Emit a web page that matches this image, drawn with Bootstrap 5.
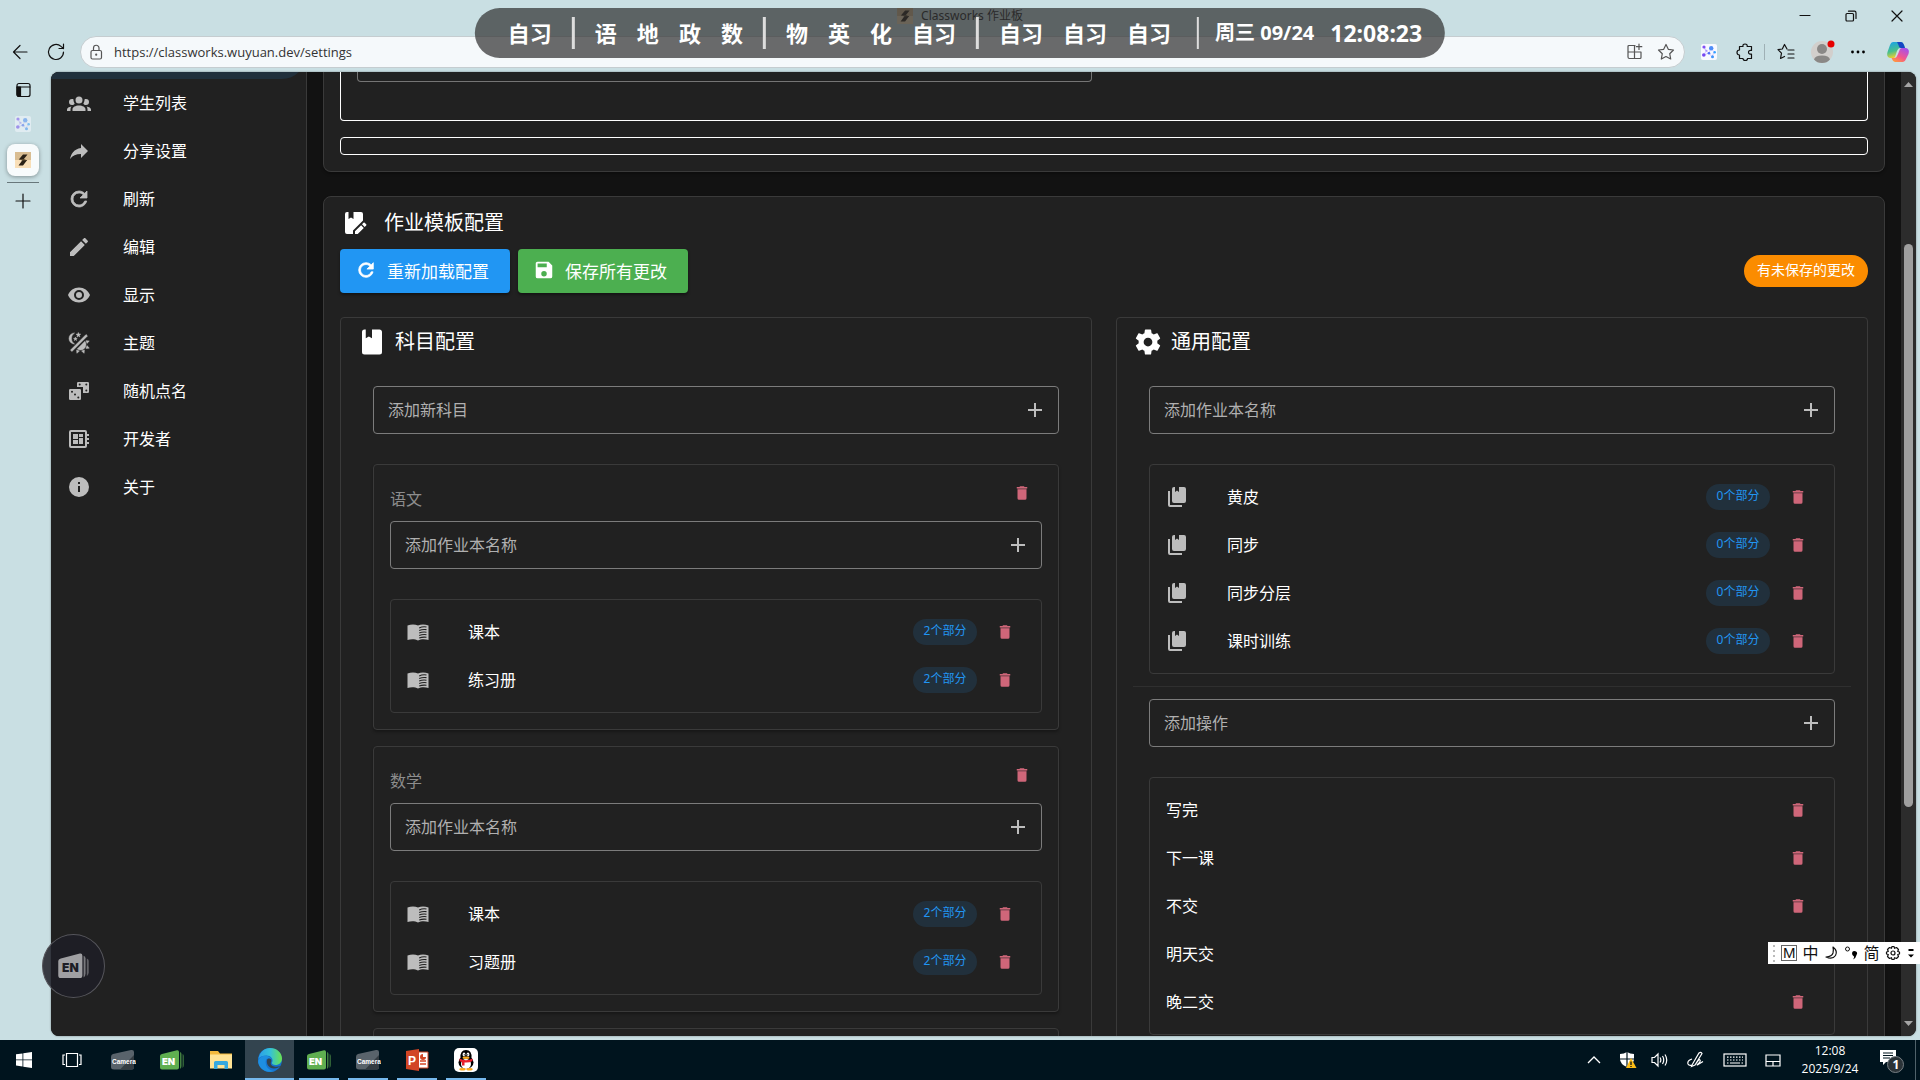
<!DOCTYPE html>
<html lang="zh-CN">
<head>
<meta charset="utf-8">
<meta name="viewport" content="width=device-width, initial-scale=1">
<title>Classworks 作业板</title>
<link href="https://cdn.jsdelivr.net/npm/bootstrap@5.3.0/dist/css/bootstrap.min.css" rel="stylesheet">
<style>
:root{--chrome:#c9dfe3;--surface:#212121;--line:#3a3a3a;--dim:#bdbdbd}
body{font-family:"Noto Sans","Noto Sans CJK SC",sans-serif;font-size:16px;line-height:24px;background:var(--chrome);color:#fff;height:100vh;overflow:hidden}
svg{display:block;flex:none}
.ic{width:24px;height:24px;fill:currentColor}
.ic18{width:18px;height:18px;fill:currentColor}
.ic22{width:22px;height:22px;fill:currentColor}
.ic30{width:30px;height:30px;fill:currentColor}
.ln{fill:none;stroke:currentColor;stroke-width:1.2;stroke-linecap:round;stroke-linejoin:round}
.bare{background:none;border:0;padding:0;color:inherit;display:flex;align-items:center;justify-content:center;flex:none}
/* browser frame */
.titlebar{height:32px;color:#111}
.titlebar .tabname{font-size:12px;color:#222}
.winbtn{width:46px;height:32px}
.toolbar{height:40px;padding:0 10px 0 8px;gap:12px;color:#111}
.address{height:32px;border:1px solid #c5cdd0;border-radius:16px;background:#f5f9fb;padding:0 8px 0 6px;gap:12px;color:#555}
.address input{background:none;border:0;outline:0;font:13px "Open Sans",sans-serif;color:#333;margin-left:-5px}
.vsep{width:1px;height:16px;background:#9fb0b5}
.toolbar .vsep{margin:0 -3px 0 -5px}
.strip{width:51px;padding-top:6px;padding-right:5px;color:#111;gap:6px}
.strip .tab-on{width:32px;height:32px;margin-top:6px;border-radius:8px;background:#f8fbfc;box-shadow:0 1px 4px rgba(0,0,0,.35)}
.strip .rule{width:32px;height:1px;background:#68777b}
.viewport{border-radius:8px;background:#121212;margin:0 4px 4px 0;box-shadow:0 0 2px rgba(0,0,0,.45)}
/* schedule overlay */
.schedule{top:8px;left:50%;transform:translateX(-50%);height:50px;border-radius:25px;background:rgba(45,45,45,.7);padding:0 23px 9px 33px;gap:20px;font-weight:700;font-size:22px;line-height:32px;white-space:nowrap;z-index:5}
.schedule .bar{width:3px;height:32px;background:#ddd}
.schedule .bar.last{width:2px;margin-left:6px}
.schedule .today{font-size:20px;margin-left:-4px}
.schedule .now{font-size:23px;margin-left:-4px}
/* sidebar */
.side{width:256px;background:var(--surface);border-right:1px solid var(--line)}
.side a{height:48px;padding-left:16px;gap:32px;color:#fff;text-decoration:none}
.side a svg{color:var(--dim)}
.side a.current{margin-top:-41px;background:#21303c;border-radius:0 24px 24px 0}
/* content */
.content{padding:0 16px}
.panel{background:var(--surface);border:1px solid var(--line);border-radius:8px;box-shadow:0 2px 3px rgba(0,0,0,.3)}
.panel.tail{border-top:0;border-radius:0 0 8px 8px;padding:0 16px 16px}
.wire{border:1px solid #fff;border-radius:4px}
.wire.open{height:49px;border-top:0;border-radius:0 0 4px 4px;padding-left:16px}
.wire.open div{width:735px;height:10px;border:1px solid #757575;border-top:0;border-radius:0 0 4px 4px}
.wire.thin{height:18px;margin-top:16px}
.panel h2,.box h2{font-size:20px;line-height:28px;font-weight:400;margin:0}
.panel-head{height:52px;gap:17px;padding-left:3px}
.act{height:44px;border:0;border-radius:4px;color:#fff;font-size:17px;line-height:24px;padding:2px 21px 0 15px;gap:10px;box-shadow:0 2px 3px rgba(0,0,0,.4)}
.act svg{margin-bottom:4px}
.act.blue{background:#2196f3}.act.green{background:#4caf50}
.unsaved{height:32px;border-radius:16px;background:#fb8c00;font-size:14px;line-height:20px;padding:5px 13px 7px}
.box{border:1px solid var(--line);border-radius:4px}
.box-head{height:48px;padding-left:16px;gap:8px}
.box-body{padding:20px 32px 0}
.field{height:48px;border:1px solid #7c7c7c;border-radius:4px;padding:0 11px 0 14px;color:var(--dim)}
.field input{background:none;border:0;outline:0;color:#fff;padding:0}
.field input::placeholder{color:#b0b0b0;opacity:1}
.listbox{margin-top:30px;padding:8px 0}
.item{height:48px;padding:0 16px 0 15px}
.item.plain{padding-left:16px}
.item .ic{color:var(--dim);margin-right:38px}
.count{width:64px;height:26px;border-radius:13px;background:#21303c;color:#2196f3;font-size:12px;line-height:24px;text-align:center;margin-right:8px}
.del{width:40px;height:40px;color:#cf6679}
.subject{padding:0 16px 16px}
.subject.first{margin-top:30px}
.subject-head{height:56px}
.subject-head h3{font-size:16px;line-height:24px;font-weight:400;color:#8d8d8d;margin:12px 0 0}
.split{height:1px;background:#2f2f2f;margin:12px -16px}
.scroll{width:15px;background:#2c2c2c;padding:8px 0}
.scroll .thumb{width:9px;background:#9f9f9f;border-radius:5px}
/* taskbar */
.taskbar{height:40px;background:#00141e;flex:none}
.task{width:49px;height:40px;position:relative}
.task.sys{width:48px}
.task.on{background:#33444f}
.task.run::after{content:"";position:absolute;left:5px;right:4px;bottom:0;height:2px;background:#76b9ed}
.task.on.run::after{left:0;right:0}
.clock{font:12px/18px "Open Sans",sans-serif;text-align:center;width:70px}
.tray{gap:14px}
.tray .vsep{height:40px;margin:0 4px 0 -4px}
/* floating tools */
.ime{right:0;top:942px;width:152px;height:22px;background:#fff;color:#111;z-index:6;font-size:16px;line-height:20px;padding:0 4px 0 5px}
.ime .m{border:1px solid #666;width:16px;height:16px;font:15px/14px "Liberation Sans",sans-serif;text-align:center}
.float-en{left:42px;top:934px;width:63px;height:64px;border-radius:50%;background:rgba(29,29,38,.85);border:1px solid #55555b;z-index:6}
</style>
<script src="https://cdn.jsdelivr.net/npm/bootstrap@5.3.0/dist/js/bootstrap.bundle.min.js"></script>
</head>
<body class="d-flex flex-column">
<svg width="0" height="0" class="position-absolute" aria-hidden="true">
<defs>
<symbol id="group" viewBox="0 0 24 24"><path d="M12,5.5A3.5,3.5 0 0,1 15.5,9A3.5,3.5 0 0,1 12,12.5A3.5,3.5 0 0,1 8.5,9A3.5,3.5 0 0,1 12,5.5M5,8C5.56,8 6.08,8.15 6.53,8.42C6.38,9.85 6.8,11.27 7.66,12.38C7.16,13.34 6.16,14 5,14A3,3 0 0,1 2,11A3,3 0 0,1 5,8M19,8A3,3 0 0,1 22,11A3,3 0 0,1 19,14C17.84,14 16.84,13.34 16.34,12.38C17.2,11.27 17.62,9.85 17.47,8.42C17.92,8.15 18.44,8 19,8M5.5,18.25C5.5,16.18 8.41,14.5 12,14.5C15.59,14.5 18.5,16.18 18.5,18.25V20H5.5V18.25M0,20V18.5C0,17.11 1.89,15.94 4.45,15.6C3.86,16.28 3.5,17.22 3.5,18.25V20H0M24,20H20.5V18.25C20.5,17.22 20.14,16.28 19.55,15.6C22.11,15.94 24,17.11 24,18.5V20Z"/></symbol>
<symbol id="share" viewBox="0 0 24 24"><path d="M21,12L14,5V9C7,10 4,15 3,20C5.5,16.5 9,14.9 14,14.9V19L21,12Z"/></symbol>
<symbol id="refresh" viewBox="0 0 24 24"><path d="M17.65,6.35C16.2,4.9 14.21,4 12,4A8,8 0 0,0 4,12A8,8 0 0,0 12,20C15.73,20 18.84,17.45 19.73,14H17.65C16.83,16.33 14.61,18 12,18A6,6 0 0,1 6,12A6,6 0 0,1 12,6C13.66,6 15.14,6.69 16.22,7.78L13,11H20V4L17.65,6.35Z" stroke="currentColor" stroke-width=".8"/></symbol>
<symbol id="pencil" viewBox="0 0 24 24"><path d="M20.71,7.04C21.1,6.65 21.1,6 20.71,5.63L18.37,3.29C18,2.9 17.35,2.9 16.96,3.29L15.12,5.12L18.87,8.87M3,17.25V21H6.75L17.81,9.93L14.06,6.18L3,17.25Z"/></symbol>
<symbol id="eye" viewBox="0 0 24 24"><path d="M12,9A3,3 0 0,0 9,12A3,3 0 0,0 12,15A3,3 0 0,0 15,12A3,3 0 0,0 12,9M12,17A5,5 0 0,1 7,12A5,5 0 0,1 12,7A5,5 0 0,1 17,12A5,5 0 0,1 12,17M12,4.5C7,4.5 2.73,7.61 1,12C2.73,16.39 7,19.5 12,19.5C17,19.5 21.27,16.39 23,12C21.27,7.61 17,4.5 12,4.5Z"/></symbol>
<symbol id="theme" viewBox="0 0 24 24"><path d="M7.5,2C5.71,3.15 4.5,5.18 4.5,7.5C4.5,9.82 5.71,11.85 7.53,13C4.46,13 2,10.54 2,7.5A5.5,5.5 0 0,1 7.5,2M19.07,3.5L20.5,4.93L4.93,20.5L3.5,19.07L19.07,3.5M12.89,5.93L11.41,5L9.97,6L10.39,4.3L9,3.24L10.75,3.12L11.33,1.47L12,3.1L13.73,3.13L12.38,4.26L12.89,5.93M9.59,9.54L8.43,8.81L7.31,9.59L7.65,8.27L6.56,7.44L7.92,7.35L8.37,6.06L8.88,7.33L10.24,7.36L9.19,8.23L9.59,9.54M19,13.5A5.5,5.5 0 0,1 13.5,19C12.28,19 11.15,18.6 10.24,17.93L17.93,10.24C18.6,11.15 19,12.28 19,13.5M14.6,20.08L17.37,18.93L17.13,22.28L14.6,20.08M18.93,17.38L20.08,14.61L22.28,17.15L18.93,17.38M20.08,12.42L18.94,9.64L22.28,9.88L20.08,12.42M9.63,18.93L12.4,20.08L9.87,22.27L9.63,18.93Z" stroke="currentColor" stroke-width=".5"/></symbol>
<symbol id="dice" viewBox="0 0 24 24"><path d="M11.2 3H20.8A1.2 1.2 0 0 1 22 4.200V12.800A1.200 1.200 0 0 1 20.800 14H16V8H10V4.200A1.200 1.200 0 0 1 11.200 3ZM3.200 10H12.800A1.200 1.200 0 0 1 14 11.200V19.800A1.200 1.200 0 0 1 12.800 21H3.200A1.200 1.200 0 0 1 2 19.800V11.200A1.200 1.200 0 0 1 3.200 10Z"/><g fill="#212121"><circle cx="12.700" cy="5.500" r="1"/><circle cx="19.300" cy="5.500" r="1"/><circle cx="19.300" cy="11.500" r="1"/><circle cx="5" cy="12.700" r="1"/><circle cx="8" cy="15.500" r="1"/><circle cx="11.300" cy="18.400" r="1"/></g></symbol>
<symbol id="board" viewBox="0 0 24 24"><path d="M22,9V7H20V5A2,2 0 0,0 18,3H4A2,2 0 0,0 2,5V19A2,2 0 0,0 4,21H18A2,2 0 0,0 20,19V17H22V15H20V13H22V11H20V9H22M18,19H4V5H18V19M6,13H11V17H6V13M12,7H16V10H12V7M6,7H11V12H6V7M12,11H16V17H12V11Z"/></symbol>
<symbol id="info" viewBox="0 0 24 24"><path d="M13,9H11V7H13M13,17H11V11H13M12,2A10,10 0 0,0 2,12A10,10 0 0,0 12,22A10,10 0 0,0 22,12A10,10 0 0,0 12,2Z"/></symbol>
<symbol id="book" viewBox="0 0 24 24"><path d="M18,22A2,2 0 0,0 20,20V4C20,2.890 19.100,2 18,2H12V9L9.500,7.500L7,9V2H6A2,2 0 0,0 4,4V20A2,2 0 0,0 6,22H18Z"/></symbol>
<symbol id="bookedit" viewBox="0 0 24 24"><path d="M4 1A2 2 0 0 0 2 3V21A2 2 0 0 0 4 23H10V19.500L20 9.500V3A2 2 0 0 0 18 1H10.500V8L8 6.500 5.500 8V1ZM12 20.300V23H14.700L20.800 16.900 18.100 14.200ZM23.200 14.500 21.700 16 19 13.300 20.500 11.800A.9.9 0 0 1 21.700 11.800L23.200 13.300A.9.9 0 0 1 23.200 14.500Z"/></symbol>
<symbol id="save" viewBox="0 0 24 24"><path d="M15,9H5V5H15M12,19A3,3 0 0,1 9,16A3,3 0 0,1 12,13A3,3 0 0,1 15,16A3,3 0 0,1 12,19M17,3H5C3.890,3 3,3.900 3,5V19A2,2 0 0,0 5,21H19A2,2 0 0,0 21,19V7L17,3Z"/></symbol>
<symbol id="cog" viewBox="0 0 24 24"><path d="M12,15.500A3.500,3.500 0 0,1 8.500,12A3.500,3.500 0 0,1 12,8.500A3.500,3.500 0 0,1 15.500,12A3.500,3.500 0 0,1 12,15.500M19.430,12.970C19.470,12.650 19.500,12.330 19.500,12C19.500,11.670 19.470,11.340 19.430,11L21.540,9.370C21.730,9.220 21.780,8.950 21.660,8.730L19.660,5.270C19.540,5.050 19.270,4.960 19.050,5.050L16.560,6.050C16.040,5.660 15.500,5.320 14.870,5.070L14.500,2.420C14.460,2.180 14.250,2 14,2H10C9.750,2 9.540,2.180 9.500,2.420L9.130,5.070C8.500,5.320 7.960,5.660 7.440,6.050L4.950,5.050C4.730,4.960 4.460,5.050 4.340,5.270L2.340,8.730C2.210,8.950 2.270,9.220 2.460,9.370L4.570,11C4.530,11.340 4.500,11.670 4.500,12C4.500,12.330 4.530,12.650 4.570,12.970L2.460,14.630C2.270,14.780 2.210,15.050 2.340,15.270L4.340,18.730C4.460,18.950 4.730,19.030 4.950,18.950L7.440,17.940C7.960,18.340 8.500,18.680 9.130,18.930L9.500,21.580C9.540,21.820 9.750,22 10,22H14C14.250,22 14.460,21.820 14.500,21.580L14.870,18.930C15.500,18.670 16.040,18.340 16.560,17.940L19.050,18.950C19.270,19.030 19.540,18.950 19.660,18.730L21.660,15.270C21.780,15.050 21.730,14.780 21.540,14.630L19.430,12.970Z"/></symbol>
<symbol id="plus" viewBox="0 0 24 24"><path d="M19,13H13V19H11V13H5V11H11V5H13V11H19V13Z"/></symbol>
<symbol id="trash" viewBox="0 0 24 24"><path d="M19,4H15.500L14.500,3H9.500L8.500,4H5V6H19M6,19A2,2 0 0,0 8,21H16A2,2 0 0,0 18,19V7H6V19Z"/><path d="M6 6H18V7H6Z" opacity=".6"/></symbol>
<symbol id="openbook" viewBox="0 0 24 24"><path d="M1.500 5.500C5 4 9 4 12 5.500 15 4 19 4 22.500 5.500V20C19 19 15 19 12 20.500 9 19 5 19 1.500 20Z"/><path d="M13.200 8Q16.500 6.300 20.500 7M13.200 10.500Q16.500 9 20.500 9.600M13.200 13Q16.500 11.600 20.500 12.200M13.200 15.500Q16.500 14.200 20.500 14.700M13.200 18Q16.500 16.800 20.500 17.300" fill="none" stroke="#212121" stroke-width="1.100"/></symbol>
<symbol id="books" viewBox="0 0 24 24"><path d="M19,18H9A2,2 0 0,1 7,16V4A2,2 0 0,1 9,2H10V7L12,5.500L14,7V2H19A2,2 0 0,1 21,4V16A2,2 0 0,1 19,18M17,20V22H5A2,2 0 0,1 3,20V6H5V20H17Z"/></symbol>
<symbol id="dotsapp" viewBox="0 0 16 16"><rect width="16" height="16" rx="2" fill="#f8f9ff"/><path d="M3 3 5 7 3 11 8 9 10 4 13 8 11 13 8 9 5 7Z" fill="none" stroke="#c5b8ff" stroke-width=".7"/><circle cx="3" cy="3" r="1.600" fill="#8050f5"/><circle cx="2.800" cy="11" r="1.800" fill="#7447f2"/><circle cx="10.200" cy="4.200" r="2.200" fill="#4d8df8"/><circle cx="8" cy="9.200" r="1.300" fill="#4a6cf6"/><circle cx="13.700" cy="8.300" r="1.200" fill="#33a1ff"/><circle cx="11.500" cy="12.700" r="1.500" fill="#3f95fa"/><circle cx="5.500" cy="6.800" r="1" fill="#a893fa"/></symbol>
<symbol id="bolt" viewBox="0 0 16 16"><rect width="16" height="16" fill="#f9dfb8"/><rect width="16" height="8" fill="#d9bd92"/><path d="M8 2.500H12.500L8.500 7.500H3.800ZM7.500 8H12.200L8 13.500H3.500Z" fill="#2a2115"/><path d="M4 7H9L12.200 8.500H7Z" fill="#5a4a30"/></symbol>
<symbol id="en" viewBox="0 0 26 22"><path d="M3 5 18 1.200Q20 .8 20 3V18.500Q20 20.500 18 20.500H3Q1 20.500 1 18.500V7Q1 5.500 3 5Z"/><path d="M21 3Q22.500 3.500 22.500 5V17Q22.500 19 21 20Z" opacity=".7"/><path d="M23.500 5Q25 5.500 25 7V16Q25 18 23.500 19Z" opacity=".5"/></symbol>
</defs>
</svg>

<header class="position-relative flex-shrink-0">
  <div class="titlebar d-flex align-items-center justify-content-end position-relative">
    <div class="tabname position-absolute start-50 translate-middle-x d-flex align-items-center gap-2"><svg width="16" height="16"><use href="#bolt"/></svg>Classworks 作业板</div>
    <button class="bare winbtn" aria-label="最小化"><svg class="ln" width="12" height="12"><path d="M1 5.500H11"/></svg></button>
    <button class="bare winbtn" aria-label="还原"><svg class="ln" width="12" height="12"><rect x="1" y="3.500" width="7.500" height="7.500" rx="1"/><path d="M3.500 1.200H9.500Q11 1.200 11 3V8.500"/></svg></button>
    <button class="bare winbtn" aria-label="关闭"><svg class="ln" width="12" height="12"><path d="M1 1 11 11M11 1 1 11"/></svg></button>
  </div>
  <div class="toolbar d-flex align-items-center">
    <button class="bare" aria-label="返回"><svg class="ln" width="24" height="24"><path d="M19 12H5.500M12 5.500 5.500 12 12 18.500"/></svg></button>
    <button class="bare" aria-label="刷新"><svg class="ln" width="24" height="24"><path d="M19.500 12A7.500 7.500 0 1 1 17 6.400L19.500 8.500M19.500 4V8.500H15"/></svg></button>
    <div class="address d-flex align-items-center flex-grow-1">
      <svg class="ln" width="18" height="18"><rect x="4" y="7.500" width="10.500" height="8.500" rx="1.500"/><path d="M6.500 7.500V5A2.700 2.700 0 0 1 12 5V7.500"/><circle cx="9.200" cy="11.700" r=".5"/></svg>
      <input class="flex-grow-1" aria-label="地址" value="https://classworks.wuyuan.dev/settings">
      <button class="bare" aria-label="安装应用"><svg class="ln" width="18" height="18"><path d="M9 2.500H3Q2 2.500 2 3.500V14Q2 15.500 3.500 15.500H14Q15 15.500 15 14.500V9H2M8.500 2.500V15.500M13 1V6.500M10.300 3.700H15.800"/></svg></button>
      <button class="bare" aria-label="收藏"><svg class="ln" width="20" height="20"><path d="M10 2.500 12.300 7.300 17.500 8 13.700 11.700 14.700 17 10 14.500 5.300 17 6.300 11.700 2.500 8 7.700 7.300Z"/></svg></button>
    </div>
    <button class="bare ms-1" aria-label="扩展程序"><svg width="16" height="16"><use href="#dotsapp"/></svg></button>
    <button class="bare ms-1" aria-label="扩展"><svg class="ln" width="24" height="24"><path d="M8 6.500H10Q9.500 4 12 4T14.200 6.500H18.500V10.500Q15.500 10 15.500 12.200T18.500 14.200V18.500H14.500Q14.500 20.500 12.300 20.500T10 18.500H6.500V15Q4 15 4 12.500T6.500 10V6.500Z"/></svg></button>
    <span class="vsep"></span>
    <button class="bare" aria-label="收藏夹"><svg class="ln" width="24" height="24"><path d="M13 9 10.500 4.500 8.300 9 4 9.700 7.500 13.200 6.500 18.500 10.500 16.500M14 10H20M14 14H20M14 18H20"/></svg></button>
    <button class="bare" aria-label="个人资料"><svg width="26" height="26"><circle cx="12" cy="13" r="11" fill="#d2cfcc"/><circle cx="12" cy="10" r="5" fill="#8a8886"/><path d="M4 20.500Q5 16.500 12 16.500T20 20.500Q17 24 12 24T4 20.500Z" fill="#8a8886"/><circle cx="21" cy="5" r="3.500" fill="#e60000"/></svg></button>
    <button class="bare" aria-label="更多"><svg width="22" height="24"><circle cx="4.500" cy="12" r="1.400"/><circle cx="10" cy="12" r="1.400"/><circle cx="15.500" cy="12" r="1.400"/></svg></button>
    <button class="bare ms-1" aria-label="Copilot"><svg width="24" height="24"><defs><linearGradient id="cpA" x2=".3" y2="1"><stop stop-color="#15a0f0"/><stop offset=".6" stop-color="#49c08a"/><stop offset="1" stop-color="#f5d02c"/></linearGradient><linearGradient id="cpB" x1=".8" x2=".2" y2="1"><stop stop-color="#a24ff0"/><stop offset=".6" stop-color="#f4568c"/><stop offset="1" stop-color="#ff9a3d"/></linearGradient></defs><path d="M7 2H15Q17 2 18 5L19 8H14Q12 8 11 11L9 17Q8 19 6 18H4Q0 17 1.500 12L4 5Q5 2 7 2Z" fill="url(#cpA)"/><path d="M11 2H15Q17 2 18 5L19 8H15Q13 8 12.500 5Z" fill="#1546c4"/><path d="M17 22H9Q7 22 6 19L5.500 18H9Q11 17 12 14L14 9Q15 7.500 17 8H20Q24 9 22.500 14L20 19Q19 22 17 22Z" fill="url(#cpB)"/></svg></button>
  </div>
  <div class="schedule position-absolute d-flex align-items-end">
    <span>自习</span><i class="bar"></i><span>语</span><span>地</span><span>政</span><span>数</span><i class="bar"></i><span>物</span><span>英</span><span>化</span><span>自习</span><i class="bar"></i><span>自习</span><span>自习</span><span>自习</span><i class="bar last"></i><span class="today">周三 09/24</span><span class="now">12:08:23</span>
  </div>
</header>

<div class="d-flex flex-grow-1" style="min-height:0">
  <nav class="strip d-flex flex-column align-items-center flex-shrink-0" aria-label="标签页">
    <button class="bare" aria-label="标签操作"><svg class="ln" width="24" height="24"><rect x="6" y="5.500" width="13" height="13" rx="2"/><path d="M6 9H19"/><path d="M6 9H9.500V18.500H8Q6 18.500 6 16Z" fill="currentColor"/></svg></button>
    <button class="bare mt-2 opacity-50" aria-label="扩展标签"><svg width="16" height="16"><use href="#dotsapp"/></svg></button>
    <button class="bare tab-on" aria-label="Classworks"><svg width="16" height="16"><use href="#bolt"/></svg></button>
    <span class="rule"></span>
    <button class="bare" aria-label="新建标签页"><svg class="ln" width="24" height="24"><path d="M12 5V19M5 12H19"/></svg></button>
  </nav>

  <div class="viewport d-flex flex-grow-1 overflow-hidden">
    <nav class="side flex-shrink-0" aria-label="设置">
      <a href="#" class="current d-block" aria-label="当前"></a>
      <a href="#" class="d-flex align-items-center"><svg class="ic"><use href="#group"/></svg>学生列表</a>
      <a href="#" class="d-flex align-items-center"><svg class="ic"><use href="#share"/></svg>分享设置</a>
      <a href="#" class="d-flex align-items-center"><svg class="ic"><use href="#refresh"/></svg>刷新</a>
      <a href="#" class="d-flex align-items-center"><svg class="ic"><use href="#pencil"/></svg>编辑</a>
      <a href="#" class="d-flex align-items-center"><svg class="ic"><use href="#eye"/></svg>显示</a>
      <a href="#" class="d-flex align-items-center"><svg class="ic"><use href="#theme"/></svg>主题</a>
      <a href="#" class="d-flex align-items-center"><svg class="ic"><use href="#dice"/></svg>随机点名</a>
      <a href="#" class="d-flex align-items-center"><svg class="ic"><use href="#board"/></svg>开发者</a>
      <a href="#" class="d-flex align-items-center"><svg class="ic"><use href="#info"/></svg>关于</a>
    </nav>

    <main class="content flex-grow-1 overflow-hidden">
      <section class="panel tail">
        <div class="wire open"><div></div></div>
        <div class="wire thin"></div>
      </section>

      <section class="panel mt-4 px-3 pb-3">
        <div class="panel-head d-flex align-items-center"><svg class="ic"><use href="#bookedit"/></svg><h2>作业模板配置</h2></div>
        <div class="d-flex align-items-center gap-2">
          <button class="act blue d-flex align-items-center"><svg class="ic22"><use href="#refresh"/></svg>重新加载配置</button>
          <button class="act green d-flex align-items-center"><svg class="ic22"><use href="#save"/></svg>保存所有更改</button>
          <span class="unsaved ms-auto">有未保存的更改</span>
        </div>
        <div class="row mt-4">
          <div class="col-6">
            <section class="box">
              <div class="box-head d-flex align-items-center"><svg class="ic30"><use href="#book"/></svg><h2>科目配置</h2></div>
              <div class="box-body pb-4">
                <div class="field d-flex align-items-center"><input class="flex-grow-1" aria-label="添加新科目" placeholder="添加新科目"><button class="bare" aria-label="添加"><svg class="ic"><use href="#plus"/></svg></button></div>
                <article class="box subject first panel rounded-1">
                  <div class="subject-head d-flex align-items-center justify-content-between"><h3>语文</h3><button class="bare del" aria-label="删除语文"><svg class="ic18"><use href="#trash"/></svg></button></div>
                  <div class="field d-flex align-items-center"><input class="flex-grow-1" aria-label="添加作业本名称" placeholder="添加作业本名称"><button class="bare" aria-label="添加"><svg class="ic"><use href="#plus"/></svg></button></div>
                  <div class="box listbox">
                    <div class="item d-flex align-items-center"><svg class="ic"><use href="#openbook"/></svg>课本<span class="count ms-auto">2个部分</span><button class="bare del" aria-label="删除"><svg class="ic18"><use href="#trash"/></svg></button></div>
                    <div class="item d-flex align-items-center"><svg class="ic"><use href="#openbook"/></svg>练习册<span class="count ms-auto">2个部分</span><button class="bare del" aria-label="删除"><svg class="ic18"><use href="#trash"/></svg></button></div>
                  </div>
                </article>
                <article class="box subject panel rounded-1 mt-3">
                  <div class="subject-head d-flex align-items-center justify-content-between"><h3>数学</h3><button class="bare del" aria-label="删除数学"><svg class="ic18"><use href="#trash"/></svg></button></div>
                  <div class="field d-flex align-items-center"><input class="flex-grow-1" aria-label="添加作业本名称" placeholder="添加作业本名称"><button class="bare" aria-label="添加"><svg class="ic"><use href="#plus"/></svg></button></div>
                  <div class="box listbox">
                    <div class="item d-flex align-items-center"><svg class="ic"><use href="#openbook"/></svg>课本<span class="count ms-auto">2个部分</span><button class="bare del" aria-label="删除"><svg class="ic18"><use href="#trash"/></svg></button></div>
                    <div class="item d-flex align-items-center"><svg class="ic"><use href="#openbook"/></svg>习题册<span class="count ms-auto">2个部分</span><button class="bare del" aria-label="删除"><svg class="ic18"><use href="#trash"/></svg></button></div>
                  </div>
                </article>
                <article class="box subject panel rounded-1 mt-3"><div class="subject-head"></div></article>
              </div>
            </section>
          </div>
          <div class="col-6">
            <section class="box h-100">
              <div class="box-head d-flex align-items-center"><svg class="ic30"><use href="#cog"/></svg><h2>通用配置</h2></div>
              <div class="box-body pb-4">
                <div class="field d-flex align-items-center"><input class="flex-grow-1" aria-label="添加作业本名称" placeholder="添加作业本名称"><button class="bare" aria-label="添加"><svg class="ic"><use href="#plus"/></svg></button></div>
                <div class="box listbox">
                  <div class="item d-flex align-items-center"><svg class="ic"><use href="#books"/></svg>黄皮<span class="count ms-auto">0个部分</span><button class="bare del" aria-label="删除"><svg class="ic18"><use href="#trash"/></svg></button></div>
                  <div class="item d-flex align-items-center"><svg class="ic"><use href="#books"/></svg>同步<span class="count ms-auto">0个部分</span><button class="bare del" aria-label="删除"><svg class="ic18"><use href="#trash"/></svg></button></div>
                  <div class="item d-flex align-items-center"><svg class="ic"><use href="#books"/></svg>同步分层<span class="count ms-auto">0个部分</span><button class="bare del" aria-label="删除"><svg class="ic18"><use href="#trash"/></svg></button></div>
                  <div class="item d-flex align-items-center"><svg class="ic"><use href="#books"/></svg>课时训练<span class="count ms-auto">0个部分</span><button class="bare del" aria-label="删除"><svg class="ic18"><use href="#trash"/></svg></button></div>
                </div>
                <div class="split"></div>
                <div class="field d-flex align-items-center"><input class="flex-grow-1" aria-label="添加操作" placeholder="添加操作"><button class="bare" aria-label="添加"><svg class="ic"><use href="#plus"/></svg></button></div>
                <div class="box listbox">
                  <div class="item plain d-flex align-items-center justify-content-between">写完<button class="bare del" aria-label="删除"><svg class="ic18"><use href="#trash"/></svg></button></div>
                  <div class="item plain d-flex align-items-center justify-content-between">下一课<button class="bare del" aria-label="删除"><svg class="ic18"><use href="#trash"/></svg></button></div>
                  <div class="item plain d-flex align-items-center justify-content-between">不交<button class="bare del" aria-label="删除"><svg class="ic18"><use href="#trash"/></svg></button></div>
                  <div class="item plain d-flex align-items-center justify-content-between">明天交<button class="bare del" aria-label="删除"><svg class="ic18"><use href="#trash"/></svg></button></div>
                  <div class="item plain d-flex align-items-center justify-content-between">晚二交<button class="bare del" aria-label="删除"><svg class="ic18"><use href="#trash"/></svg></button></div>
                </div>
              </div>
            </section>
          </div>
        </div>
      </section>
    </main>

    <div class="scroll d-flex flex-column align-items-center flex-shrink-0" aria-hidden="true">
      <svg width="9" height="9" fill="#a5a5a5"><path d="M0 7 4.500 2 9 7Z"/></svg>
      <div style="flex:155"></div><div class="thumb" style="flex:563"></div><div style="flex:212"></div>
      <svg width="9" height="9" fill="#a5a5a5"><path d="M0 2 4.500 7 9 2Z"/></svg>
    </div>
  </div>
</div>

<button class="bare float-en position-absolute" aria-label="EN"><svg width="33" height="28" viewBox="0 0 26 22" fill="#a0a0a3"><use href="#en"/><text x="4" y="15.500" font-family="Inter" font-weight="900" font-size="9.500" fill="#1d1d26">EN</text></svg></button>

<div class="ime position-absolute d-flex align-items-center justify-content-between" role="toolbar" aria-label="输入法">
  <svg width="3" height="18" stroke="#bbb" stroke-width="2" stroke-dasharray="2 3"><path d="M1 1V18"/></svg>
  <span class="m">M</span><span>中</span>
  <svg class="ln" width="15" height="16"><path d="M9 2Q14 6 11.500 10.500 8.500 15 2 12 8 11.500 9 8 9.700 5 9 2Z"/></svg>
  <svg width="14" height="16"><circle cx="3.500" cy="4" r="2" fill="none" stroke="#111"/><path d="M8 8A2.500 2.500 0 1 1 12.500 10Q12 13 9 14.500 10.500 12.500 10 11.500 8 11 8 8Z"/></svg>
  <span>简</span>
  <svg class="ln" width="16" height="16"><path d="M7 1.500H9L9.500 3.300 11.500 2.500 13.500 4.500 12.700 6.500 14.500 7V9L12.700 9.500 13.500 11.500 11.500 13.500 9.500 12.700 9 14.500H7L6.500 12.700 4.500 13.500 2.500 11.500 3.300 9.500 1.500 9V7L3.300 6.500 2.500 4.500 4.500 2.500 6.500 3.300Z"/><circle cx="8" cy="8" r="2"/></svg>
  <svg width="10" height="14"><path d="M2.500 3H7.500V5H2.500ZM2 8.500H8L5 11.500Z"/></svg>
</div>

<footer class="taskbar d-flex align-items-center">
  <button class="bare task sys" aria-label="开始"><svg width="16" height="16" fill="#fff"><path d="M0 2.300 6.500 1.400V7.500H0ZM7.300 1.300 16 0V7.500H7.300ZM0 8.300H6.500V14.500L0 13.600ZM7.300 8.300H16V16L7.300 14.700Z"/></svg></button>
  <button class="bare task sys" aria-label="任务视图"><svg width="20" height="16" fill="none" stroke="#fff" stroke-width="1.200"><path d="M4.500 1.500H15.500V14.500H4.500ZM3 3H1V12.500H3M17 3H19V12.500H17"/></svg></button>
  <div class="d-flex" style="margin-left:2px">
    <button class="bare task" aria-label="Camera"><svg width="26" height="22"><path d="M3 5 21 1Q24 .5 24 3V18Q24 20.500 22 20.500H4Q1 20.500 1 18V8Q1 5.500 3 5Z" fill="#59636b"/><path d="M10 20.500 24 6V18Q24 20.500 22 20.500Z" fill="#343c42"/><text x="2" y="15" font-family="Liberation Sans" font-size="6.500" font-weight="700" fill="#fff">Camera</text></svg></button>
    <button class="bare task" aria-label="EasiNote"><svg width="26" height="22" fill="#5fae50"><use href="#en"/><text x="3" y="16" font-family="Inter" font-weight="900" font-size="9.500" fill="#fff">EN</text></svg></button>
    <button class="bare task" aria-label="文件资源管理器"><svg width="22" height="20"><path d="M0 1H8L10 3.500H22V18H0Z" fill="#f3b93c"/><path d="M0 4.500H22V18.500H0Z" fill="#ffe394"/><path d="M4 19V12.500Q4 11 5.500 11H16.500Q18 11 18 12.500V19H14.500V15H7.500V19Z" fill="#35a9e0"/></svg></button>
    <button class="bare task on run" aria-label="Edge"><svg width="26" height="26" viewBox="0 0 26 26"><defs><linearGradient id="egA"><stop stop-color="#2b9fe8"/><stop offset=".5" stop-color="#35c1d8"/><stop offset="1" stop-color="#6be34f"/></linearGradient></defs><circle cx="13" cy="13" r="12" fill="#1673cf"/><path d="M1.500 11.500C3 5 7.500 1 13 1 20 1 25 6 25 11.500 25 15.500 22 18 18.500 18 16 18 14.500 17 15 15.500 17 12 13.500 8.500 9.500 8.500 6 8.500 3 9.700 1.500 11.500Z" fill="url(#egA)"/><path d="M9 13C7.500 18 11 24 17.500 24 11 26.500 3 23 1.300 16 .8 12 4 9 8 8.800 11 8.600 14 10.500 14 13 14 11.500 10 10.500 9 13Z" fill="#1e8fe0"/><path d="M10 13C9 17 12 21.500 17 21.500 20 21.500 22 20.300 23.500 19 20 20.500 14 20 13.800 16.500 13.500 15 15 14.500 14 12.500 13 11 10.500 11.500 10 13Z" fill="#33444f"/></svg></button>
    <button class="bare task run" aria-label="EasiNote 窗口"><svg width="26" height="22" fill="#5fae50"><use href="#en"/><text x="3" y="16" font-family="Inter" font-weight="900" font-size="9.500" fill="#fff">EN</text></svg></button>
    <button class="bare task run" aria-label="Camera 窗口"><svg width="26" height="22"><path d="M3 5 21 1Q24 .5 24 3V18Q24 20.500 22 20.500H4Q1 20.500 1 18V8Q1 5.500 3 5Z" fill="#59636b"/><path d="M10 20.500 24 6V18Q24 20.500 22 20.500Z" fill="#343c42"/><text x="2" y="15" font-family="Liberation Sans" font-size="6.500" font-weight="700" fill="#fff">Camera</text></svg></button>
    <button class="bare task run" aria-label="PowerPoint"><svg width="24" height="24"><path d="M12 4H23V20H12Z" fill="#fff" stroke="#d24625"/><path d="M15 13H21M15 16H21" stroke="#d24625" stroke-width="1.500"/><path d="M18 6A3 3 0 1 0 21 9H18Z" fill="#d24625"/><path d="M1 3 14 1V23L1 21Z" fill="#d24625"/><text x="3" y="16.500" font-family="Liberation Sans" font-size="12" font-weight="700" fill="#fff">P</text></svg></button>
    <button class="bare task run" aria-label="QQ"><svg width="24" height="24"><rect width="24" height="24" rx="5" fill="#fff"/><ellipse cx="12" cy="14.500" rx="7.500" ry="6.500"/><path d="M6.500 10Q6 2 12 2T17.500 10L19 13H5Z"/><ellipse cx="12" cy="16" rx="5" ry="5" fill="#fff"/><ellipse cx="10" cy="6.500" rx="1.400" ry="2" fill="#fff"/><ellipse cx="14" cy="6.500" rx="1.400" ry="2" fill="#fff"/><circle cx="10.300" cy="6.800" r=".6"/><circle cx="13.700" cy="6.800" r=".6"/><ellipse cx="12" cy="9.700" rx="3.500" ry="1.200" fill="#fba81b"/><path d="M5.500 10.500Q12 14 18.500 10.500V13Q15 15 10.500 14.500V17.500H8V14Q6 13.500 5.500 13Z" fill="#e8202c"/><ellipse cx="8.500" cy="21.300" rx="3.200" ry="1.300" fill="#fba81b"/><ellipse cx="15.500" cy="21.300" rx="3.200" ry="1.300" fill="#fba81b"/></svg></button>
  </div>
  <div class="tray d-flex align-items-center ms-auto">
    <button class="bare" aria-label="显示隐藏的图标"><svg width="14" height="10" fill="none" stroke="#fff" stroke-width="1.300"><path d="M1 8 7 2 13 8"/></svg></button>
    <button class="bare ms-1" aria-label="安全中心"><svg width="18" height="18"><path d="M1 3Q5 3 8 1 11 3 15 3V8Q15 13 8 16 1 13 1 8Z" fill="#fff"/><path d="M8 1V16M1 8H15" stroke="#00141e" stroke-width="1.200"/><path d="M12 7 17.500 17H7Z" fill="#fbbc16"/><path d="M12 10.500V14M12 15V16" stroke="#111" stroke-width="1.300"/></svg></button>
    <button class="bare" aria-label="音量"><svg width="18" height="16" fill="none" stroke="#fff" stroke-width="1.200"><path d="M1 5.500H3.500L7 2V14L3.500 10.500H1ZM9 5.500Q10.700 8 9 10.500M11.500 4Q14 8 11.500 12M14 2.500Q17.500 8 14 13.500"/></svg></button>
    <button class="bare" aria-label="Windows Ink"><svg class="ms-1" width="18" height="18" fill="none" stroke="#fff" stroke-width="1.200"><path d="M5 14 12 2Q14 .5 15 2.500L8 14 4.500 15.500ZM5 8Q0 9.500 1 13 2 15 5 14M8 14Q12 7.500 13 9T11 13 16 10.500"/></svg></button>
    <button class="bare ms-1" aria-label="触摸键盘"><svg width="24" height="14" fill="none" stroke="#fff" stroke-width="1.200"><rect x="1" y="1" width="22" height="12"/><path d="M4 4.200H20M4 7H20" stroke-dasharray="1.500 1.500"/><path d="M4 10H5.500M7 10H17M18.500 10H20"/></svg></button>
    <button class="bare ms-1" aria-label="触摸板"><svg width="16" height="13" fill="none" stroke="#fff" stroke-width="1.200"><path d="M1 1H15V12H1ZM1 7.500H15M8 7.500V12"/></svg></button>
    <div class="clock">12:08<br>2025/9/24</div>
    <button class="bare" aria-label="通知"><svg width="26" height="26"><path d="M1 3H17V15H7L4 18V15H1Z" fill="#fff"/><path d="M4 6H14M4 8.500H14M4 11H11" stroke="#00141e" stroke-width="1.200"/><circle cx="16.500" cy="17.500" r="8" fill="#2b3338" stroke="#777f84"/><text x="13.500" y="22" font-family="Open Sans" font-size="12" font-weight="700" fill="#fff">1</text></svg></button>
    <span class="vsep opacity-50"></span>
  </div>
</footer>
</body>
</html>
